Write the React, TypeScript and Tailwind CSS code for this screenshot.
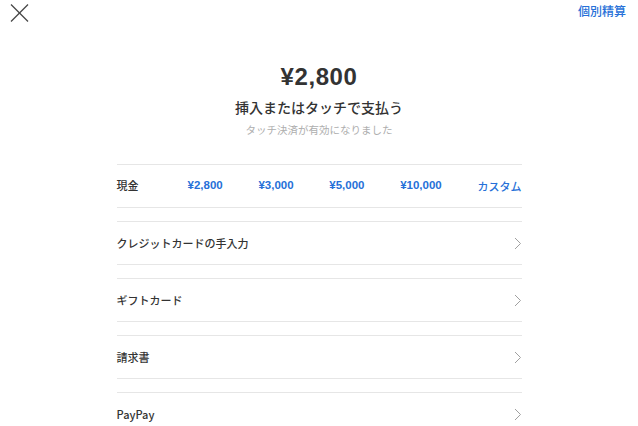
import React from 'react';

const FONT = { fontFamily: '"Liberation Sans", "Noto Sans CJK JP", sans-serif' };

const amounts = ['¥2,800', '¥3,000', '¥5,000', '¥10,000'];
const methods = ['クレジットカードの手入力', 'ギフトカード', '請求書', 'PayPay'];

function Chevron() {
  return (
    <svg width="9" height="15" viewBox="0 0 9 15" fill="none">
      <polyline points="2,2 7.5,7.5 2,13" stroke="#a0a0a0" strokeWidth="1" />
    </svg>
  );
}

export default function App() {
  return (
    <div className="w-[638px] h-[426px] overflow-hidden bg-white text-[#333]" style={FONT}>
      {/* header */}
      <div className="flex justify-between items-start h-[28px] pl-[9px] pr-[12px] pt-[3px]">
        <button className="w-[20px] h-[20px]">
          <svg width="20" height="20" viewBox="0 0 20 20" fill="none">
            <line x1="2" y1="1.5" x2="19" y2="18.5" stroke="#444" strokeWidth="1.3" />
            <line x1="19" y1="1.5" x2="2" y2="18.5" stroke="#444" strokeWidth="1.3" />
          </svg>
        </button>
        <span className="text-[12px] leading-[18px] font-medium text-[#2670d8]">個別精算</span>
      </div>

      {/* amount */}
      <div className="flex flex-col items-center">
        <div className="mt-[35px] text-[24px] leading-[28px] font-bold tracking-[0.6px] text-[#333]">¥2,800</div>
        <div className="mt-[7px] text-[14px] leading-[20px] font-medium text-[#333]">挿入またはタッチで支払う</div>
        <div className="mt-[4px] text-[10.5px] leading-[16px] text-[#aeaeae]">タッチ決済が有効になりました</div>
      </div>

      {/* options */}
      <div className="w-[405px] mx-auto mt-[26px] flex flex-col gap-[13px]">
        <div className="h-[44px] border-y border-[#e6e6e6] flex items-center">
          <span className="w-[71px] text-[11px] font-medium text-[#333]">現金</span>
          <div className="flex-1 flex justify-between items-center">
            {amounts.map((a) => (
              <span key={a} className="text-[11.5px] font-bold text-[#2670d8]">{a}</span>
            ))}
            <span className="text-[11px] font-medium text-[#2670d8] [font-family:'Noto_Sans_CJK_JP',sans-serif]">カスタム</span>
          </div>
        </div>
        {methods.map((m) => (
          <div key={m} className="h-[44px] border-y border-[#e6e6e6] flex items-center justify-between">
            <span className="text-[11px] font-medium text-[#333] [font-family:'Noto_Sans_CJK_JP',sans-serif]">{m}</span>
            <Chevron />
          </div>
        ))}
      </div>
    </div>
  );
}
